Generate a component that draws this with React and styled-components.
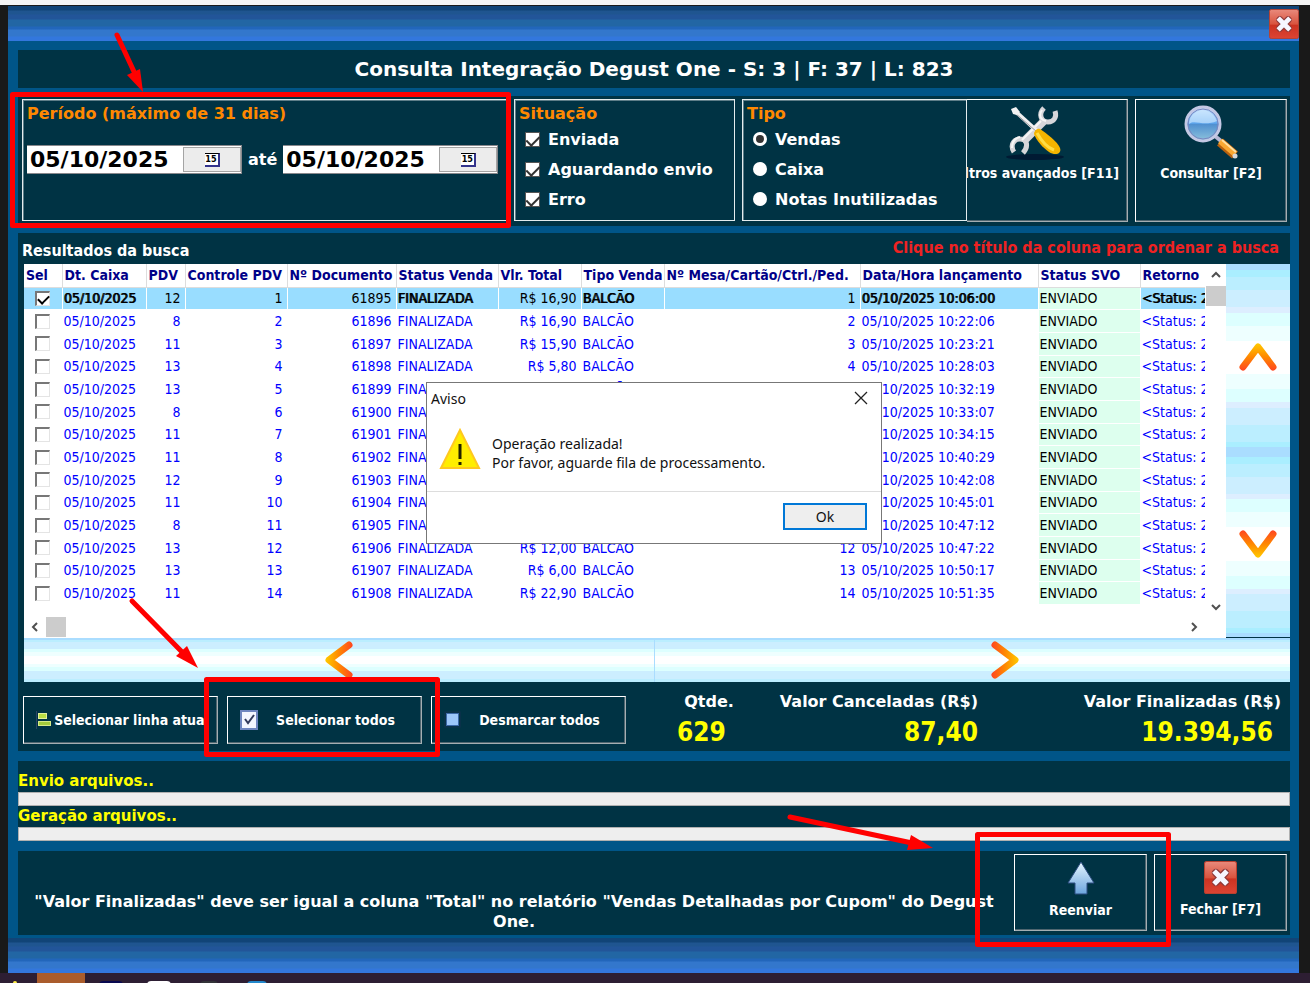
import { useState } from 'react'
import styled, { createGlobalStyle } from 'styled-components'

const columns = [
    { key: 'sel', title: 'Sel', width: 38 },
    { key: 'date', title: 'Dt. Caixa', width: 84 },
    { key: 'pdv', title: 'PDV', width: 39, right: true },
    { key: 'control', title: 'Controle PDV', width: 102, right: true },
    { key: 'doc', title: 'Nº Documento', width: 109, right: true },
    { key: 'sale', title: 'Status Venda', width: 102 },
    { key: 'total', title: 'Vlr. Total', width: 83, right: true },
    { key: 'type', title: 'Tipo Venda', width: 83 },
    { key: 'desk', title: 'Nº Mesa/Cartão/Ctrl./Ped.', width: 196, right: true },
    { key: 'launched', title: 'Data/Hora lançamento', width: 178 },
    { key: 'svo', title: 'Status SVO', width: 102 },
    { key: 'ret', title: 'Retorno', width: 65 }
]

const sales = [
    [12, '16,90', '10:06:00'],
    [8, '16,90', '10:22:06'],
    [11, '15,90', '10:23:21'],
    [13, '5,80', '10:28:03'],
    [13, '9,90', '10:32:19'],
    [8, '12,90', '10:33:07'],
    [11, '16,90', '10:34:15'],
    [11, '15,90', '10:40:29'],
    [12, '8,00', '10:42:08'],
    [11, '16,90', '10:45:01'],
    [8, '6,00', '10:47:12'],
    [13, '12,00', '10:47:22'],
    [13, '6,00', '10:50:17'],
    [11, '22,90', '10:51:35']
]

const rows = sales.map(([pdv, total, time], index) => ({
    date: '05/10/2025',
    pdv,
    control: index + 1,
    doc: 61895 + index,
    sale: 'FINALIZADA',
    total: `R$ ${total}`,
    type: 'BALCÃO',
    desk: index + 1,
    launched: `05/10/2025 ${time}`,
    svo: 'ENVIADO',
    ret: '<Status: 2'
}))

const CloseIcon = ({ size }) => (
    <svg width={size} height={size} viewBox="0 0 32 32" aria-hidden="true">
        <defs>
            <linearGradient id="closeRed" x1="0" y1="0" x2="0" y2="1">
                <stop offset="0" stopColor="#e98a7c" />
                <stop offset="0.5" stopColor="#d9543f" />
                <stop offset="0.55" stopColor="#cc3322" />
                <stop offset="1" stopColor="#dd4433" />
            </linearGradient>
        </defs>
        <rect x="0.5" y="0.5" width="31" height="31" rx="2" fill="url(#closeRed)" stroke="#b8402f" />
        <path d="M11.5 11.5 L20.5 20.5 M20.5 11.5 L11.5 20.5" stroke="#8f3a3a" strokeWidth="7.5" strokeLinecap="round" />
        <path d="M11.5 11.5 L20.5 20.5 M20.5 11.5 L11.5 20.5" stroke="#f6f6ff" strokeWidth="5" strokeLinecap="square" />
    </svg>
)

const ToolsIcon = () => (
    <svg width="60" height="56" viewBox="0 0 60 56" aria-hidden="true">
        <ellipse cx="30" cy="52" rx="29" ry="3" fill="#001a33" />
        <g fill="none" stroke="#d6d6da">
            <path d="M39 16 L18 37" strokeWidth="8" />
            <path d="M39 3 C33 9 36 17 43 17 C49 17 52 12 50 6" strokeWidth="5" />
            <path d="M9 47 C5 41 8 34 15 34 C22 34 24 41 18 48" strokeWidth="5" />
        </g>
        <path d="M36 16 L17 35 M37 5 C33 11 36 15 41 16 M7 43 C7 37 10 33 15 32" fill="none" stroke="#f6f6f6" strokeWidth="2" />
        <path d="M10 6 L32 26" stroke="#f0f0f0" strokeWidth="4" />
        <path d="M10 8 L32 27" stroke="#98989c" strokeWidth="1" />
        <path d="M6 4 L11 2 L15 7 L12 10 L8 9 Z" fill="#f2f2f2" />
        <path d="M29 29 C29 26 32 23 35 24 C41 28 53 37 55 43 C57 49 50 51 44 47 C38 43 31 35 29 29 Z" fill="#f5b400" />
        <path d="M32 28 C37 37 43 43 49 45" stroke="#ffdd44" strokeWidth="3" fill="none" />
    </svg>
)

const LensIcon = () => (
    <svg width="56" height="56" viewBox="0 0 56 56" aria-hidden="true">
        <defs>
            <linearGradient id="lens" x1="0" y1="0" x2="0" y2="1">
                <stop offset="0" stopColor="#c8e4ff" />
                <stop offset="0.48" stopColor="#5fa8f0" />
                <stop offset="0.5" stopColor="#4f8fd0" />
                <stop offset="1" stopColor="#8fc4dc" />
            </linearGradient>
        </defs>
        <path d="M32 31 L38 36" stroke="#b7b7d4" strokeWidth="4" />
        <circle cx="20" cy="19" r="17" fill="url(#lens)" stroke="#c4c8e4" strokeWidth="3" />
        <circle cx="20" cy="19" r="15" fill="none" stroke="#7a86c0" />
        <path d="M6 19 C12 14 20 22 34 16 C31 9 26 5 19 5 C11 6 6 12 6 19 Z" fill="#d7ecff" opacity="0.6" />
        <path d="M37 37 L52 50" stroke="#b8610e" strokeWidth="9" />
        <path d="M37 36 L52 49" stroke="#f9a832" strokeWidth="6" />
        <path d="M39 35 L53 47" stroke="#ffe0a0" strokeWidth="2" />
        <circle cx="52" cy="51" r="2.5" fill="#d8d8d8" />
    </svg>
)

const UpArrowIcon = () => (
    <svg width="28" height="34" viewBox="0 0 28 34" aria-hidden="true">
        <defs>
            <linearGradient id="upBlue" x1="0" y1="0" x2="0" y2="1">
                <stop offset="0" stopColor="#e6f6ff" />
                <stop offset="1" stopColor="#6ca4dd" />
            </linearGradient>
        </defs>
        <path d="M14 1 L27 22 H20 V33 H8 V22 H1 Z" fill="url(#upBlue)" stroke="#2d4d80" />
    </svg>
)

const chevronTurns = { up: 0, right: 90, down: 180, left: 270 }

const Chevron = ({ to }) => (
    <svg width="38" height="38" viewBox="0 0 38 38" aria-hidden="true">
        <defs>
            <linearGradient id={`flame-${to}`} gradientUnits="userSpaceOnUse" x1="0" y1="5" x2="0" y2="33">
                <stop offset="0" stopColor="#ffcc00" />
                <stop offset="0.5" stopColor="#ff8800" />
                <stop offset="1" stopColor="#ff4422" />
            </linearGradient>
        </defs>
        <path
            d="M4 29 L19 9 L34 29"
            transform={`rotate(${chevronTurns[to]} 19 19)`}
            fill="none"
            stroke={`url(#flame-${to})`}
            strokeWidth="7"
            strokeLinecap="round"
            strokeLinejoin="round"
        />
    </svg>
)

const ScrollArrow = ({ to }) => (
    <svg width="10" height="10" viewBox="0 0 10 10" aria-hidden="true">
        <path d="M1 7 L5 3 L9 7" transform={`rotate(${chevronTurns[to]} 5 5)`} fill="none" stroke="#505050" strokeWidth="2" />
    </svg>
)

const LinesIcon = () => (
    <svg width="16" height="18" viewBox="0 0 16 18" aria-hidden="true">
        <path d="M0.5 0 V18" stroke="#2c4466" />
        <rect x="2.5" y="2.5" width="8" height="5" fill="#b8dd44" stroke="#e2f09a" />
        <rect x="2.5" y="10.5" width="12" height="4" fill="#a4cc3c" stroke="#d6ea88" />
    </svg>
)

const CheckedIcon = () => (
    <svg width="18" height="20" viewBox="0 0 18 20" aria-hidden="true">
        <rect x="1" y="1" width="16" height="18" fill="#f4f6ff" stroke="#6f86c0" strokeWidth="2" />
        <path d="M5 9 L8 13 L14 5" fill="none" stroke="#333b5c" strokeWidth="2" />
    </svg>
)

const UncheckedIcon = () => (
    <svg width="18" height="18" viewBox="0 0 18 18" aria-hidden="true">
        <rect x="1" y="1" width="15" height="15" fill="none" stroke="#12304f" />
        <rect x="2.5" y="2.5" width="12" height="12" fill="#9cc6fa" stroke="#3c68a8" />
    </svg>
)

const WarningIcon = () => (
    <svg width="42" height="42" viewBox="0 0 42 42" aria-hidden="true">
        <path d="M21 2 L40 40 H2 Z" fill="#ffee00" stroke="#ffc820" strokeWidth="2" />
        <path d="M21 16 V31 M21 34 V37" stroke="#222200" strokeWidth="3" />
    </svg>
)

const DateField = ({ label }) => {
    const [value, setValue] = useState('05/10/2025')

    return (
        <DateBox>
            <DateInput aria-label={label} value={value} onChange={e => setValue(e.target.value)} />
            <DateButton type="button" aria-label={`Calendário ${label}`}>
                <CalendarBox>15</CalendarBox>
            </DateButton>
        </DateBox>
    )
}

const ResultsTable = () => {
    const [selected, setSelected] = useState([0])

    const toggle = index =>
        setSelected(selected.includes(index) ? selected.filter(i => i !== index) : [...selected, index])

    return (
        <Table>
            <colgroup>
                {columns.map(({ key, width }) => (
                    <Column key={key} $width={width} />
                ))}
            </colgroup>
            <thead>
                <tr>
                    {columns.map(({ key, title }) => (
                        <HeadCell key={key}>{title}</HeadCell>
                    ))}
                </tr>
            </thead>
            <tbody>
                {rows.map((row, index) => (
                    <Row key={row.doc} $current={index === 0}>
                        {columns.map(({ key, right }) =>
                            key === 'sel' ? (
                                <Cell key={key}>
                                    <RowCheck
                                        type="checkbox"
                                        aria-label={`Selecionar ${row.doc}`}
                                        checked={selected.includes(index)}
                                        onChange={() => toggle(index)}
                                    />
                                </Cell>
                            ) : (
                                <Cell key={key} $right={right} $svo={key === 'svo'} $heavy={index === 0 && !right && key !== 'svo'}>
                                    {row[key]}
                                </Cell>
                            )
                        )}
                    </Row>
                ))}
            </tbody>
        </Table>
    )
}

// Red boxes and arrows drawn over the window
const Marks = () => (
    <MarksLayer width="1310" height="983" viewBox="0 0 1310 983" aria-hidden="true">
        <g fill="none" stroke="#ff0000" strokeWidth="5" strokeLinejoin="round" strokeLinecap="round">
            <rect x="12.5" y="94.5" width="496" height="131" />
            <rect x="206.5" y="679.5" width="231" height="75" />
            <rect x="977.5" y="834.5" width="191" height="110" />
            <path d="M117 35 L136 76" />
            <path d="M132 601 L184 654" />
            <path d="M790 817 L912 843" />
        </g>
        <g fill="#ff0000">
            <path d="M143 92 L127 75 L140 69 Z" />
            <path d="M198 668 L176 656 L187 646 Z" />
            <path d="M933 848 L907 850 L911 835 Z" />
        </g>
    </MarksLayer>
)

const App = () => {
    const [kind, setKind] = useState('Vendas')
    const [open, setOpen] = useState(true)

    return (
        <Page>
            <GlobalStyle />
            <Desktop>
                <Window>
                    <Band>
                        <PlainButton type="button" aria-label="Fechar janela">
                            <CloseIcon size={30} />
                        </PlainButton>
                    </Band>
                    <Body>
                        <TitlePanel>
                            <Title>Consulta Integração Degust One - S: 3 | F: 37 | L: 823</Title>
                        </TitlePanel>

                        <FilterPanel>
                            <Group>
                                <Legend>Período (máximo de 31 dias)</Legend>
                                <DateRow>
                                    <DateField label="inicial" />
                                    <span>até</span>
                                    <DateField label="final" />
                                </DateRow>
                            </Group>
                            <Group>
                                <Legend>Situação</Legend>
                                {['Enviada', 'Aguardando envio', 'Erro'].map(name => (
                                    <Option key={name}>
                                        <Check type="checkbox" defaultChecked />
                                        {name}
                                    </Option>
                                ))}
                            </Group>
                            <TypeAndFilters>
                                <Group>
                                    <Legend>Tipo</Legend>
                                    {['Vendas', 'Caixa', 'Notas Inutilizadas'].map(name => (
                                        <Option key={name}>
                                            <Radio type="radio" name="tipo" checked={kind === name} onChange={() => setKind(name)} />
                                            {name}
                                        </Option>
                                    ))}
                                </Group>
                                <FiltersButton type="button">
                                    <ToolsIcon />
                                    <FiltersText>Filtros avançados [F11]</FiltersText>
                                </FiltersButton>
                            </TypeAndFilters>
                            <SearchButton type="button">
                                <LensIcon />
                                Consultar [F2]
                            </SearchButton>
                        </FilterPanel>

                        <ResultsPanel>
                            <ResultsHead>
                                <span>Resultados da busca</span>
                                <Hint>Clique no título da coluna para ordenar a busca</Hint>
                            </ResultsHead>
                            <GridArea>
                                <Sheet>
                                    <SheetTop>
                                        <TableClip>
                                            <ResultsTable />
                                        </TableClip>
                                        <VerticalBar>
                                            <ScrollArrow to="up" />
                                            <Thumb />
                                            <BarEnd>
                                                <ScrollArrow to="down" />
                                            </BarEnd>
                                        </VerticalBar>
                                    </SheetTop>
                                    <HorizontalBar>
                                        <ScrollArrow to="left" />
                                        <Thumb />
                                        <RightEnd>
                                            <ScrollArrow to="right" />
                                        </RightEnd>
                                    </HorizontalBar>
                                </Sheet>
                                <SideNav>
                                    <TallButton type="button" aria-label="Subir">
                                        <Chevron to="up" />
                                    </TallButton>
                                    <TallButton type="button" aria-label="Descer">
                                        <Chevron to="down" />
                                    </TallButton>
                                </SideNav>
                            </GridArea>
                            <BottomNav>
                                <WideButton type="button" aria-label="Esquerda">
                                    <Chevron to="left" />
                                </WideButton>
                                <WideButton type="button" aria-label="Direita">
                                    <Chevron to="right" />
                                </WideButton>
                            </BottomNav>
                            <Summary>
                                <SelectButton type="button" $tight>
                                    <LinesIcon />
                                    <ButtonText>Selecionar linha atual</ButtonText>
                                </SelectButton>
                                <SelectButton type="button">
                                    <CheckedIcon />
                                    <ButtonText>Selecionar todos</ButtonText>
                                </SelectButton>
                                <SelectButton type="button">
                                    <UncheckedIcon />
                                    <ButtonText>Desmarcar todos</ButtonText>
                                </SelectButton>
                                <Totals>
                                    <Total>
                                        <span>Qtde.</span>
                                        <Amount $inset={8}>629</Amount>
                                    </Total>
                                    <Total>
                                        <span>Valor Canceladas (R$)</span>
                                        <Amount>87,40</Amount>
                                    </Total>
                                    <LastTotal>
                                        <span>Valor Finalizadas (R$)</span>
                                        <Amount $inset={8}>19.394,56</Amount>
                                    </LastTotal>
                                </Totals>
                            </Summary>
                        </ResultsPanel>

                        <ProgressPanel>
                            <ProgressLabel id="envio">Envio arquivos..</ProgressLabel>
                            <Track role="progressbar" aria-labelledby="envio" />
                            <ProgressLabel id="geracao">Geração arquivos..</ProgressLabel>
                            <Track role="progressbar" aria-labelledby="geracao" />
                        </ProgressPanel>

                        <FooterPanel>
                            <Note>
                                "Valor Finalizadas" deve ser igual a coluna "Total" no relatório "Vendas Detalhadas por Cupom" do Degust
                                One.
                            </Note>
                            <ActionButton type="button">
                                <UpArrowIcon />
                                Reenviar
                            </ActionButton>
                            <ActionButton type="button">
                                <CloseIcon size={33} />
                                Fechar [F7]
                            </ActionButton>
                        </FooterPanel>
                    </Body>
                    <Band />
                </Window>
            </Desktop>
            <Taskbar>
                <Tab $color="#ffee44" $before={13} $width={4} $low />
                <Tab $color="#aa5c2c" $before={20} $width={48} />
                <Tab $color="#080850" $before={14} $width={24} $low />
                <Tab $color="#ffffff" $before={24} $width={24} $low />
                <Tab $color="#333338" $before={29} $width={18} $low />
                <Tab $color="#2288cc" $before={29} $width={20} $low />
            </Taskbar>

            {open && (
                <Dialog role="dialog" aria-labelledby="aviso">
                    <DialogHead>
                        <span id="aviso">Aviso</span>
                        <PlainButton type="button" aria-label="Fechar aviso" onClick={() => setOpen(false)}>
                            <svg width="14" height="14" viewBox="0 0 14 14" aria-hidden="true">
                                <path d="M1 1 L13 13 M13 1 L1 13" stroke="#222" strokeWidth="1.3" />
                            </svg>
                        </PlainButton>
                    </DialogHead>
                    <DialogBody>
                        <WarningIcon />
                        <p>
                            Operação realizada!
                            <br />
                            Por favor, aguarde fila de processamento.
                        </p>
                    </DialogBody>
                    <DialogFoot>
                        <OkButton type="button" onClick={() => setOpen(false)}>
                            Ok
                        </OkButton>
                    </DialogFoot>
                </Dialog>
            )}
            <Marks />
        </Page>
    )
}

const wide = `'DejaVu Sans', Verdana, sans-serif`
const narrow = `'DejaVu Sans Condensed', Tahoma, sans-serif`
const system = `'Noto Sans', 'Segoe UI', sans-serif`

const GlobalStyle = createGlobalStyle`
    * {
        box-sizing: border-box;
    }

    body {
        margin: 0;
        background: #191919;
    }

    button,
    input {
        font: inherit;
        color: inherit;
    }
`

const Page = styled.div`
    position: relative;
    overflow: hidden;
    color: #ffffff;
    font-family: ${wide};
    font-size: 16px;
    font-weight: bold;
`

const Desktop = styled.div`
    padding: 1px 11px 0 8px;
    border-top: 5px solid #f4f4f4;
`

const Window = styled.main`
    background: #005588;
`

const Band = styled.div`
    display: flex;
    justify-content: flex-end;
    align-items: center;
    height: 35px;
    background: linear-gradient(
        #114477 0 4px,
        #1f5590 5px 8px,
        #225599 9px 13px,
        #2266a4 14px 20px,
        #2266bb 21px 23px,
        #3377cc 24px 30px,
        #3377dd 31px
    );
`

const PlainButton = styled.button`
    display: flex;
    padding: 0;
    border: 0;
    background: none;
    cursor: pointer;
`

const Body = styled.div`
    display: flex;
    flex-direction: column;
    padding: 9px 9px 3px 10px;
`

const Panel = styled.section`
    background: #003344;
`

const TitlePanel = styled(Panel)`
    padding: 6px;
    margin-bottom: 8px;
    text-align: center;
`

const Title = styled.h1`
    margin: 0;
    font-size: 20px;
    line-height: 26px;
`

const FilterPanel = styled(Panel)`
    display: grid;
    grid-template-columns: minmax(0, 485fr) minmax(0, 221fr) minmax(0, 386fr) minmax(0, 152fr);
    align-items: start;
    gap: 7px;
    height: 130px;
    padding: 3px 3px 4px 4px;
    margin-bottom: 7px;
`

const Group = styled.div`
    display: flex;
    flex-direction: column;
    height: 122px;
    padding: 4px;
    border: 1px solid #e4ecee;
    box-shadow: inset 1px 1px 0 #5d7d88;
`

const Legend = styled.div`
    color: #ff8800;
    line-height: 20px;
`

const DateRow = styled.div`
    display: flex;
    align-items: center;
    gap: 6px;
    margin-top: 21px;
`

const DateBox = styled.div`
    display: flex;
    width: 215px;
    height: 29px;
    padding: 1px 0;
    border: 1px solid #88888c;
    border-left: 0;
    background: #ffffff;
    color: #000000;
`

const DateInput = styled.input`
    flex: 1;
    min-width: 0;
    padding: 0 3px;
    border: 0;
    background: none;
    font-size: 22px;
    line-height: 24px;
`

const DateButton = styled.button`
    display: flex;
    align-items: center;
    justify-content: center;
    width: 58px;
    padding: 0;
    border: 1px solid #a4a4a4;
    background: #ececec;
`

const CalendarBox = styled.span`
    width: 15px;
    height: 14px;
    border: 1px solid #33338c;
    border-width: 1px 2px 2px 0;
    border-top-color: #000000;
    background: #ffffff;
    font-family: ${narrow};
    font-size: 9px;
    line-height: 11px;
`

const Option = styled.label`
    display: flex;
    align-items: center;
    gap: 8px;
    height: 30px;
    padding-left: 6px;
    white-space: nowrap;
`

const Check = styled.input`
    appearance: none;
    display: grid;
    place-items: center;
    width: 15px;
    height: 15px;
    margin: 0;
    border: 1px solid #555555;
    background: #ffffff;

    &:checked::before {
        content: '';
        width: 6px;
        height: 11px;
        margin-bottom: 3px;
        border: solid #333333;
        border-width: 0 2px 2px 0;
        transform: rotate(45deg);
    }
`

const Radio = styled.input`
    appearance: none;
    display: grid;
    place-items: center;
    width: 14px;
    height: 14px;
    margin: 0;
    border-radius: 50%;
    background: #ffffff;

    &:checked::before {
        content: '';
        width: 8px;
        height: 8px;
        border-radius: 50%;
        background: #333333;
    }
`

const TypeAndFilters = styled.div`
    display: grid;
    grid-template-columns: minmax(0, 225fr) minmax(0, 161fr);
    align-items: start;
`

const BevelButton = styled.button`
    display: flex;
    flex-direction: column;
    align-items: center;
    min-width: 0;
    border: 1px solid;
    border-color: #ffffff #a4aeb2 #a4aeb2 #ffffff;
    box-shadow: inset -1px -1px 0 #4f6670;
    background: #003344;
    font-family: ${narrow};
    font-size: 14px;
    line-height: 18px;
    cursor: pointer;
`

const FiltersButton = styled(BevelButton)`
    gap: 3px;
    height: 123px;
    padding: 5px 8px 0 0;
    border-left: 0;
    overflow: hidden;

    svg {
        margin-left: -16px;
    }
`

const FiltersText = styled.span`
    align-self: flex-end;
    white-space: nowrap;
`

const SearchButton = styled(BevelButton)`
    gap: 3px;
    height: 123px;
    padding: 5px 0 0;
`

const ResultsPanel = styled(Panel)`
    margin-bottom: 10px;
    padding: 3px 0 7px;
`

const ResultsHead = styled.div`
    display: flex;
    justify-content: space-between;
    height: 28px;
    padding: 0 11px 0 4px;
    font-family: ${narrow};
    line-height: 30px;
`

const Hint = styled.span`
    color: #ee2222;
    line-height: 23px;
`

const GridArea = styled.div`
    display: flex;
    height: 374px;
    padding-left: 6px;
`

const Sheet = styled.div`
    flex: 1;
    min-width: 0;
    background: #ffffff;
`

const SheetTop = styled.div`
    display: flex;
    height: 352px;
`

const TableClip = styled.div`
    flex: 1;
    min-width: 0;
    overflow: hidden;
`

const Table = styled.table`
    width: 100%;
    height: 341px;
    border-collapse: collapse;
    table-layout: fixed;
    font-family: ${narrow};
    font-size: 14px;
    font-weight: normal;
    line-height: 18px;
`

const Column = styled.col`
    width: ${({ $width }) => $width}px;
`

const HeadCell = styled.th`
    height: 23px;
    padding: 0 0 0 2px;
    border-right: 1px solid #dddddd;
    border-bottom: 1px solid #dddddd;
    color: #000088;
    text-align: left;
    white-space: nowrap;
    overflow: hidden;

    &:last-child {
        border-right: 0;
    }
`

const Row = styled.tr`
    background: ${({ $current }) => ($current ? '#99ddff' : '#ffffff')};
    color: ${({ $current }) => ($current ? '#000000' : '#0000ff')};
`

const Cell = styled.td`
    padding: ${({ $right }) => ($right ? '0 4px 0 0' : '0 0 0 1px')};
    border: 1px solid #ffffff;
    border-left: 0;
    text-align: ${({ $right }) => ($right ? 'right' : 'left')};
    white-space: nowrap;
    overflow: hidden;
    ${({ $heavy }) => $heavy && 'text-shadow: 1px 0 0 #000000;'}
    ${({ $svo }) => $svo && 'background: #ddffee; color: #000000;'}
`

const RowCheck = styled.input`
    appearance: none;
    display: grid;
    place-items: center;
    width: 15px;
    height: 15px;
    margin: 0 0 0 10px;
    border: 1px solid #e4e4e4;
    border-top: 2px solid #777777;
    border-left: 2px solid #777777;
    background: #ffffff;

    &:checked::before {
        content: '';
        width: 5px;
        height: 9px;
        margin-bottom: 3px;
        border: solid #000000;
        border-width: 0 2px 2px 0;
        transform: rotate(45deg);
    }
`

const VerticalBar = styled.div`
    display: flex;
    flex-direction: column;
    align-items: center;
    gap: 6px;
    width: 21px;
    padding: 6px 0 4px;
`

const Thumb = styled.div`
    width: 20px;
    height: 20px;
    background: #cccccc;
`

const BarEnd = styled.div`
    display: flex;
    margin-top: auto;
`

const HorizontalBar = styled.div`
    display: flex;
    align-items: center;
    gap: 6px;
    height: 22px;
    padding: 0 27px 0 6px;
`

const RightEnd = styled.div`
    display: flex;
    margin-left: auto;
`

const SideNav = styled.div`
    display: flex;
    flex-direction: column;
    width: 64px;
    border-bottom: 1px solid #003344;
`

const NavButton = styled.button`
    display: flex;
    align-items: center;
    justify-content: center;
    flex: 1;
    padding: 0;
    border: 0;
    cursor: pointer;
`

const TallButton = styled(NavButton)`
    background: linear-gradient(
        #aaddff 0 3%,
        #aaeeff 3% 7%,
        #bbeeff 7% 14%,
        #cceeff 14% 23%,
        #ddeeff 23% 26%,
        #ddffff 26% 33%,
        #eeffff 33% 41%,
        #ffffff 41% 59%,
        #eeffff 59% 67%,
        #ddffff 67% 74%,
        #ddeeff 74% 77%,
        #cceeff 77% 86%,
        #bbeeff 86% 95%,
        #aaeeff 95% 98%,
        #aaddff 98%
    );
`

const BottomNav = styled.div`
    display: flex;
    height: 44px;
    padding-left: 6px;
`

const WideButton = styled(NavButton)`
    background: linear-gradient(
        #aaddff 0 4%,
        #bbeeff 4% 10%,
        #cceeff 10% 24%,
        #ddffff 24% 32%,
        #eeffff 32% 40%,
        #ffffff 40% 60%,
        #eeffff 60% 66%,
        #ddffff 66% 76%,
        #cceeff 76% 94%,
        #bbeeff 94%
    );

    & + & {
        flex: 0 0 636px;
        padding-left: 64px;
        border-left: 1px solid #aaddff;
    }
`

const Summary = styled.div`
    display: flex;
    gap: 9px;
    margin-top: 14px;
    padding-left: 5px;
`

const SelectButton = styled(BevelButton)`
    flex-direction: row;
    flex: 0 0 195px;
    gap: ${({ $tight }) => ($tight ? '2px' : '0')};
    height: 48px;
    padding: 0 0 0 12px;
    overflow: hidden;

    svg {
        flex-shrink: 0;
    }
`

const ButtonText = styled.span`
    flex: 1;
    padding-right: 8px;
    white-space: nowrap;
`

const Totals = styled.div`
    display: flex;
    flex: 1;
    gap: 46px;
    padding: 0 9px 0 42px;
    line-height: 20px;
    white-space: nowrap;
`

const Total = styled.div`
    display: flex;
    flex-direction: column;
    align-items: flex-end;
    justify-content: space-between;
    margin: -4px 0;
`

const LastTotal = styled(Total)`
    margin-left: auto;
`

const Amount = styled.strong`
    padding-right: ${({ $inset = 0 }) => $inset}px;
    color: #ffff00;
    font-family: ${narrow};
    font-size: 26px;
    line-height: 32px;
`

const ProgressPanel = styled(Panel)`
    padding-top: 10px;
    margin-bottom: 10px;
`

const ProgressLabel = styled.div`
    color: #ffff00;
    font-size: 15px;
    line-height: 21px;
`

const Track = styled.div`
    height: 14px;
    border: 1px solid #b0b0b0;
    background: #eeeeee;
`

const FooterPanel = styled(Panel)`
    display: flex;
    gap: 7px;
    height: 84px;
    padding: 3px 3px 4px;
`

const Note = styled.p`
    flex: 1;
    margin: 0;
    padding-top: 38px;
    text-align: center;
    line-height: 20px;
`

const ActionButton = styled(BevelButton)`
    flex: 0 0 133px;
    gap: 6px;
    padding-top: 6px;
`

const Taskbar = styled.footer`
    display: flex;
    align-items: flex-start;
    height: 10px;
    background: #2d1e33;
    overflow: hidden;
`

const Tab = styled.span`
    width: ${({ $width }) => $width}px;
    height: 16px;
    margin-top: ${({ $low }) => ($low ? '8px' : '0')};
    margin-left: ${({ $before }) => $before}px;
    border-radius: ${({ $low }) => ($low ? '4px' : '0')};
    background: ${({ $color }) => $color};
`

const Dialog = styled.div`
    position: absolute;
    top: 382px;
    left: 426px;
    width: 456px;
    border: 1px solid #777777;
    background: #ffffff;
    color: #111111;
    font-family: ${system};
    font-size: 14px;
    font-weight: normal;
`

const DialogHead = styled.div`
    display: flex;
    align-items: center;
    justify-content: space-between;
    height: 30px;
    padding: 0 13px 0 4px;
`

const DialogBody = styled.div`
    display: flex;
    align-items: flex-start;
    gap: 11px;
    height: 78px;
    padding: 15px 12px 0;

    p {
        margin: 6px 0 0;
        line-height: 19px;
    }
`

const DialogFoot = styled.div`
    display: flex;
    justify-content: flex-end;
    padding: 11px 14px 13px;
    border-top: 1px solid #dddddd;
`

const OkButton = styled.button`
    width: 84px;
    height: 27px;
    padding: 0;
    border: 2px solid #0078d7;
    background: #eeeeee;
    line-height: 20px;
`

const MarksLayer = styled.svg`
    position: absolute;
    top: 0;
    left: 0;
    pointer-events: none;
`

export default App
